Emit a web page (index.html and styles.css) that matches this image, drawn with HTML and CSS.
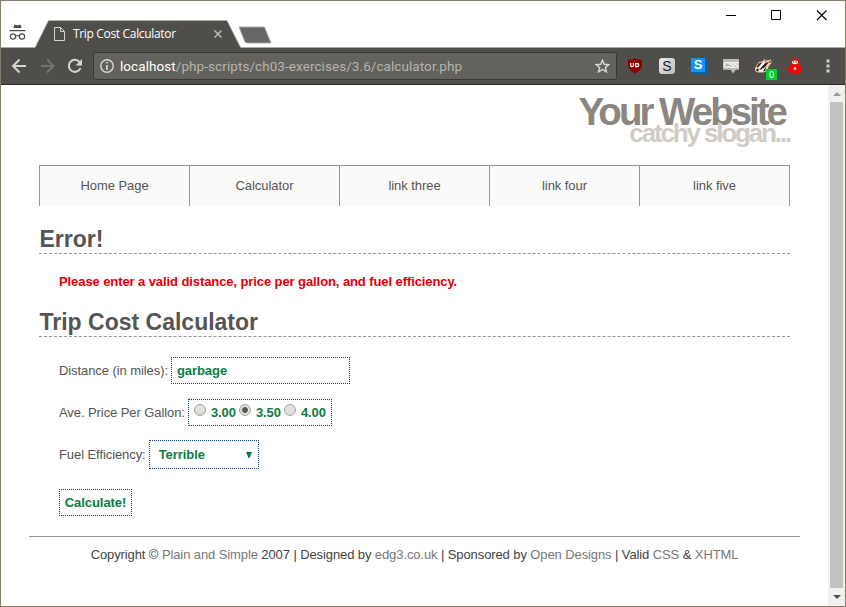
FILE: index.html
```html
<!DOCTYPE html>
<html lang="en">
<head>
<meta charset="utf-8">
<title>Trip Cost Calculator</title>
<link rel="stylesheet" href="styles.css">
</head>
<body>
<div class="window">
  <div class="titlebar">
    <svg class="incognito" width="17" height="18" viewBox="0 0 17 18"><path d="M4.500 3.500 5.500.5l3 .8L11.500.5l1 3V4H4.500zM.5 6h16v1.300H.5z" fill="#4d4b48"/><g fill="none" stroke="#4d4b48" stroke-width="1.200"><circle cx="4" cy="12.500" r="2.600"/><circle cx="13" cy="12.500" r="2.600"/><path d="M6.500 12q2-1 4 0"/></g></svg>
    <div class="tab">
      <svg class="tab-shape" width="206" height="28" viewBox="0 0 206 28"><path d="M0 28 13.500.5H192L206 28z" fill="#504e4b"/><path d="M0 27.500 13.500.5H192L205.500 27.500" fill="none" stroke="#aaaea6"/></svg>
      <svg class="page-icon" width="11" height="14" viewBox="0 0 11 14"><path d="M.5.5H6.500L10.500 4.500V13.500H.5zM6.500.5V4.500H10.500" fill="none" stroke="#d6d5d0"/></svg>
      <span class="tab-title">Trip Cost Calculator</span>
      <svg class="tab-close" width="8" height="8" viewBox="0 0 8 8"><path d="M.5.5 7.500 7.500M7.500.5.5 7.500" stroke="#c2c1bd" stroke-width="1.400"/></svg>
    </div>
    <svg class="new-tab" width="34" height="18" viewBox="0 0 34 18"><path d="M1 1H26.500L32.500 16Q33 17 32 17H9Q7.500 17 7 16z" fill="#666" stroke="#aaada7"/></svg>
    <svg class="controls" width="101" height="11" viewBox="0 0 101 11"><g fill="none" stroke="#000"><path d="M0 5.500H10M45.500.5h9v9h-9z"/><path d="M91 .5 100.500 10M100.500.5 91 10" stroke-width="1.100"/></g></svg>
  </div>
  <div class="toolbar">
    <svg class="nav-icons" width="72" height="18" viewBox="0 0 72 18"><g fill="none" stroke-width="2"><path d="M15 9H2M8.500 2.500 2 9l6.500 6.500" stroke="#d6d6cf"/><path d="M30 9H42M36 2.500 42.500 9 36 15.500" stroke="#74736e"/><path d="M68.500 5A6 6 0 1 0 69.500 11" stroke="#d6d6cf"/></g><path d="M71 2V8.500H64.500z" fill="#d6d6cf"/></svg>
    <div class="address">
      <svg width="14" height="14" viewBox="0 0 14 14"><circle cx="7" cy="7" r="6.200" fill="none" stroke="#dcdbd4" stroke-width="1.400"/><path d="M6.200 3h1.600v1.600H6.200zM6.200 6h1.600v5H6.200z" fill="#dcdbd4"/></svg>
      <span class="url"><b>localhost</b>/php-scripts/ch03-exercises/3.6/calculator.php</span>
      <svg width="15" height="14" viewBox="0 0 15 14"><path d="M7.500 1.300 9.300 5.300 13.700 5.700 10.400 8.500 11.400 12.800 7.500 10.500 3.600 12.800 4.600 8.500 1.300 5.700 5.700 5.300z" fill="none" stroke="#dcdbd4" stroke-width="1.400"/></svg>
    </div>
    <div class="extensions">
      <svg width="16" height="18" viewBox="0 0 16 18"><path d="M8 1Q11 3 15 3V9Q14 14 8 16.500 2 14 1 9V3Q5 3 8 1z" fill="#8c0000"/><path d="M3.700 6v2.500q0 1.200 1.200 1.200 1.500 0 1.500-1.200V6M8.700 6.600h1.600a1.500 1.500 0 0 1 0 3H8.700z" fill="none" stroke="#fff" stroke-width="1.200"/></svg>
      <span class="ext-s">S</span>
      <span class="ext-blue">S</span>
      <span class="ext-css">CSS</span>
      <span class="ext-badger"><svg width="17" height="16" viewBox="0 0 17 16"><path d="M0 10 4 4 8 3 9 1 12 2.500 16 1.500 16.500 5 14 8 12 13 8 14.500 3 14.500 0 13z" fill="#efc9ae"/><path d="M1.500 9 4.500 5 7 4.500 3 9.500zM6 9 11 4.500 13.500 4.500 10 9 5 12zM9.500 3l.8-1 1 1.500zM13.500 4l2-1.500v2.500zM7 13l4-4-1 4z" fill="#282420"/><path d="M3 10 8.500 4.500H10.500L5.500 10zM3 13l4-1.500 3-2-2 4z" fill="#fff"/><circle cx="2.500" cy="12" r="1.200" fill="#282420"/></svg><i>0</i></span>
      <svg width="16" height="17" viewBox="0 0 16 17"><path d="M4 4Q4 .5 8 .5T12 4V6.500Q15 8 15 13.500 14 15 12.500 14V16H9V14.500H7V16H3.500V14Q2 15 1 13.500 1 8 4 6.500z" fill="red"/><ellipse cx="8" cy="4.300" rx="3" ry="1.900" fill="#fff"/><path d="M6 3.500h1.300v1.300H6zM8.700 3.500H10v1.300H8.700z" fill="#345"/><circle cx="8" cy="10.500" r="1.300" fill="#fff"/></svg>
    </div>
    <svg class="menu" width="4" height="14" viewBox="0 0 4 14"><path d="M.5.5h3v3h-3zM.5 5.500h3v3h-3zM.5 10.500h3v3h-3z" fill="#d2d1cb"/></svg>
  </div>
  <div class="viewport">
    <div class="page">
      <header class="header">
        <h1>Your Website</h1>
        <h2>catchy slogan...</h2>
      </header>
      <nav class="nav"><a>Home Page</a><a>Calculator</a><a>link three</a><a>link four</a><a>link five</a></nav>
      <main class="content">
        <h1 class="heading">Error!</h1>
        <p class="error">Please enter a valid distance, price per gallon, and fuel efficiency.</p>
        <h1 class="heading">Trip Cost Calculator</h1>
        <form class="form">
          <label class="row">Distance (in miles): <input class="box distance" type="text" value="garbage"></label>
          <div class="row">Ave. Price Per Gallon: <span class="box prices"><input type="radio" name="price"><span>3.00</span><input type="radio" name="price" checked><span>3.50</span><input type="radio" name="price"><span>4.00</span></span></div>
          <div class="row fuel">Fuel Efficiency: <span class="box select">Terrible<svg width="6" height="6" viewBox="0 0 6 6"><path d="M0 0h6L3.500 6h-1z" fill="#0b7d42"/></svg></span></div>
          <button class="box submit" type="button">Calculate!</button>
        </form>
      </main>
      <footer class="footer">Copyright © <a>Plain and Simple</a> 2007 | Designed by <a>edg3.co.uk</a> | Sponsored by <a>Open Designs</a> | Valid <a>CSS</a> &amp; <a>XHTML</a></footer>
    </div>
    <div class="scrollbar">
      <svg width="8" height="4" viewBox="0 0 8 4"><path d="M4 0 8 4H0z" fill="#9e9c98"/></svg>
      <div class="thumb"></div>
      <svg width="8" height="4" viewBox="0 0 8 4"><path d="M0 0H8L4 4z" fill="#504e4b"/></svg>
    </div>
  </div>
</div>
</body>
</html>
```
FILE: styles.css
```css
* { box-sizing: border-box; }
body { margin: 0; font: 13px "Liberation Sans", Arial, sans-serif; color: #555; }
svg { display: block; flex: none; }
.window { width: 846px; height: 607px; border: 1px solid #857d6b; background: #fff; display: flex; flex-direction: column; overflow: hidden; }

.titlebar { height: 47px; flex: none; display: flex; align-items: flex-end; border-bottom: 1px solid #aaaea6; }
.incognito { margin: 0 0 5px 8px; }
.tab { position: relative; width: 206px; height: 28px; margin: 0 0 -1px 9px; display: flex; align-items: center; padding-left: 19px; }
.tab-shape { position: absolute; left: 0; top: 0; }
.page-icon { position: relative; }
.tab-title { position: relative; margin-left: 8px; width: 141px; font: 12px/16px "Open Sans", sans-serif; letter-spacing: -.33px; color: #fff; white-space: nowrap; }
.tab-close { position: relative; }
.new-tab { margin: 0 0 3px -3px; }
.controls { margin: 0 18px 26px auto; }

.toolbar { height: 37px; flex: none; display: flex; align-items: center; background: #504e4b; border-bottom: 1px solid #2b2928; }
.nav-icons { margin-left: 10px; }
.address { width: 524px; height: 28px; margin-left: 10px; padding: 0 6px; display: flex; align-items: center; background: #63625c; border: 1px solid #393835; border-radius: 3px; }
.url { flex: 1; margin-left: 6px; font: 13.5px/20px Roboto, sans-serif; letter-spacing: .07px; color: #b5b4ae; white-space: nowrap; }
.url b { font-weight: 400; color: #fff; }
.extensions { display: flex; align-items: center; gap: 16px; margin-left: 10px; }
.ext-s { width: 16px; height: 16px; border-radius: 3px; background: linear-gradient(135deg, #eee, #bbb); color: #222; font: 14px/17px "Liberation Sans", sans-serif; text-align: center; }
.ext-blue { width: 16px; height: 16px; background: #0f94ff; border: solid #0b61a8; border-width: 0 2px 2px 0; color: #fff; font: bold 13px/14px "Liberation Sans", sans-serif; text-align: center; }
.ext-css { width: 16px; height: 15px; background: #bcbab5; clip-path: polygon(0 0, 100% 0, 100% 75%, 80% 75%, 63% 100%, 46% 75%, 0 75%); color: #fff; font: bold 9px/12px "Liberation Sans", sans-serif; letter-spacing: -1.4px; text-indent: -1px; text-align: center; }
.ext-badger { position: relative; width: 16px; height: 16px; }
.ext-badger i { position: absolute; left: 11px; top: 11px; width: 11px; height: 11px; background: #0c3; color: #fff; font: 9px/11px "Open Sans", sans-serif; text-align: center; }
.menu { margin-left: auto; margin-right: 15.5px; }

.viewport { flex: 1; display: flex; min-height: 0; }
.page { width: 771px; margin-left: 28px; }
.header { height: 80px; padding: 7px 0 0; text-align: right; }
.header h1 { margin: 0; padding-right: 15px; font: bold 38.5px/40px "Liberation Sans", sans-serif; letter-spacing: -3px; color: #8b8680; }
.header h2 { margin: -14px 0 0; padding-right: 10px; font: bold 26px/30px "Liberation Sans", sans-serif; letter-spacing: -2.15px; color: #d0ccc5; }
.nav { display: flex; width: 751px; height: 41px; margin: 0 10px; background: #fafaf8; border-top: 1px solid #99968f; border-right: 1px solid #99968f; }
.nav a { width: 150px; border-left: 1px solid #99968f; line-height: 40px; letter-spacing: -.06px; text-align: center; }
.content { margin: 0 10px; }
.heading { height: 29px; margin: 19px 0 0; font: bold 23px/29px "Liberation Sans", sans-serif; text-indent: .5px; color: #555; border-bottom: 1px dashed #99968f; }
.error { margin: 19px 20px 0; line-height: 18px; font-weight: bold; letter-spacing: -.09px; color: #dd0008; }
.error + .heading { margin-top: 17px; }
.form { margin: 20px 20px 0; }
.row { display: flex; align-items: center; height: 27px; margin-bottom: 15px; gap: 3px; letter-spacing: -.08px; white-space: nowrap; }
.box { font: bold 13px "Liberation Sans", sans-serif; letter-spacing: -.06px; color: #0b7d42; background: #fff; border: 1px dotted #113c75; border-radius: 0; padding: 5px; }
.distance { width: 179px; height: 27px; }
.prices { width: 144px; height: 27px; display: flex; align-items: center; padding: 0 5px; }
.prices input { appearance: none; flex: none; width: 12px; height: 12px; margin: -5px 0 0; border: 1px solid #a5a29e; border-radius: 50%; background: linear-gradient(#e6e4e1, #dddbd7); }
.prices input:checked { background: radial-gradient(circle, #5a5855 2.5px, #e2e0dc 3.300px); }
.prices span { flex: none; width: 28px; margin-left: 5px; letter-spacing: -.1px; }
.fuel { height: 29px; margin-top: -1px; margin-bottom: 20px; }
.select { width: 110px; height: 29px; display: flex; align-items: center; justify-content: space-between; padding: 0 6px 0 9px; }
.submit { display: block; width: 73px; height: 27px; padding: 0; }
.footer { margin-top: 20px; border-top: 1px solid #99968f; line-height: 16px; padding-top: 10px; text-align: center; letter-spacing: -.1px; color: #444; white-space: nowrap; }
.footer a { color: #777; }
.scrollbar { width: 17px; margin-left: auto; background: #f1f1f0; display: flex; flex-direction: column; align-items: center; padding: 7px 0; }
.thumb { width: 13px; flex: 1; margin: 6px 0 7px; background: #c1c1bf; }
```
